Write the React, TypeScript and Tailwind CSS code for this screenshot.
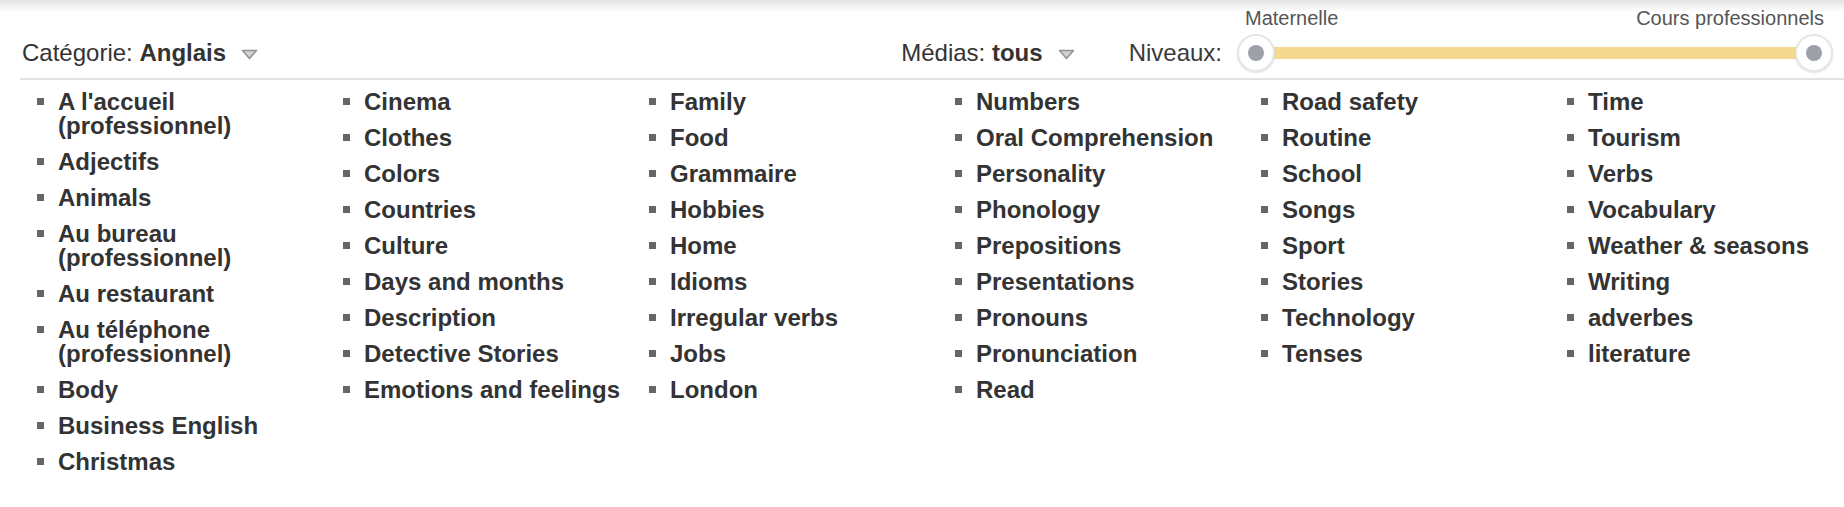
import React from "react";

const columns: string[][] = [
  [
    "A l'accueil (professionnel)",
    "Adjectifs",
    "Animals",
    "Au bureau (professionnel)",
    "Au restaurant",
    "Au téléphone (professionnel)",
    "Body",
    "Business English",
    "Christmas",
  ],
  [
    "Cinema",
    "Clothes",
    "Colors",
    "Countries",
    "Culture",
    "Days and months",
    "Description",
    "Detective Stories",
    "Emotions and feelings",
  ],
  [
    "Family",
    "Food",
    "Grammaire",
    "Hobbies",
    "Home",
    "Idioms",
    "Irregular verbs",
    "Jobs",
    "London",
  ],
  [
    "Numbers",
    "Oral Comprehension",
    "Personality",
    "Phonology",
    "Prepositions",
    "Presentations",
    "Pronouns",
    "Pronunciation",
    "Read",
  ],
  [
    "Road safety",
    "Routine",
    "School",
    "Songs",
    "Sport",
    "Stories",
    "Technology",
    "Tenses",
  ],
  [
    "Time",
    "Tourism",
    "Verbs",
    "Vocabulary",
    "Weather & seasons",
    "Writing",
    "adverbes",
    "literature",
  ],
];

const DropTriangle = ({ className = "" }: { className?: string }) => (
  <svg width="17" height="11" viewBox="0 0 17 11" className={className}>
    <path
      d="M1.5 1.5 H15.5 L8.5 9.5 Z"
      fill="#d2d2d2"
      stroke="#959595"
      strokeWidth="1.6"
      strokeLinejoin="round"
    />
  </svg>
);

const Thumb = ({ className = "" }: { className?: string }) => (
  <div
    className={`absolute top-0 w-[38px] h-[38px] rounded-full bg-white border-2 border-[#e6e6e6] shadow-[0_1px_2px_rgba(0,0,0,0.12)] flex items-center justify-center ${className}`}
  >
    <div className="w-[16px] h-[16px] rounded-full bg-[#9ca1a9]" />
  </div>
);

const LevelSlider = () => (
  <div className="relative w-[596px] h-[38px]">
    <span className="absolute left-[8px] -top-[26px] text-[20px] leading-[20px] text-[#555] whitespace-nowrap">
      Maternelle
    </span>
    <span className="absolute right-[9px] -top-[26px] text-[20px] leading-[20px] text-[#555] whitespace-nowrap">
      Cours professionnels
    </span>
    <div className="absolute left-[19px] right-[19px] top-[13px] h-[12px] bg-[#f5d98e]" />
    <Thumb className="left-0" />
    <Thumb className="right-0" />
  </div>
);

export default function App() {
  return (
    <div
      className="w-full h-[507px] bg-white text-[#333] overflow-hidden"
      style={{ fontFamily: '"Liberation Sans", Arial, sans-serif' }}
    >
      {/* top shadow */}
      <div className="h-[12px] bg-gradient-to-b from-[#e3e3e3] to-white" />

      {/* filters */}
      <div className="ml-[20px] h-[68px] pt-[18px] pb-[2px] flex items-center border-b-2 border-[#e2e2e2] text-[24px] leading-[24px]">
        <div className="flex items-center pl-[2px]">
          <span>
            Catégorie: <b className="font-bold">Anglais</b>
          </span>
          <DropTriangle className="ml-[15px] mt-[2px]" />
        </div>
        <div className="flex-1" />
        <div className="flex items-center pr-[11px]">
          <span>
            Médias: <b className="font-bold">tous</b>
          </span>
          <DropTriangle className="ml-[15px] mt-[2px]" />
          <span className="ml-[54px] text-[#3a3a3a]">Niveaux:</span>
          <div className="ml-[15px]">
            <LevelSlider />
          </div>
        </div>
      </div>

      {/* categories */}
      <div className="flex pl-[20px] pt-[10px]">
        {columns.map((col, i) => (
          <ul key={i} className="w-[306px] shrink-0">
            {col.map((item) => (
              <li key={item} className="flex items-start mb-[12px]">
                <span className="ml-[17px] mt-[8px] w-[7px] h-[7px] bg-[#666] shrink-0" />
                <span className="ml-[14px] flex-1 min-w-0 pr-[4px] text-[24px] leading-[24px] font-bold text-[#333]">
                  {item}
                </span>
              </li>
            ))}
          </ul>
        ))}
      </div>
    </div>
  );
}
